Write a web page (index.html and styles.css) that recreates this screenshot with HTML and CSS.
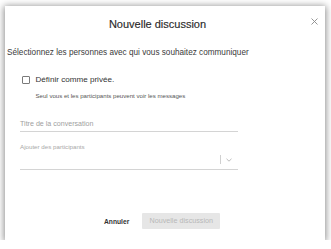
FILE: index.html
```html
<!DOCTYPE html>
<html lang="fr">
<head>
<meta charset="utf-8">
<title>Nouvelle discussion</title>
<link rel="stylesheet" href="styles.css">
</head>
<body>
<div class="modal">
  <div class="header">
    <div class="title">Nouvelle discussion</div>
    <button class="close" aria-label="Fermer">
      <svg width="7" height="7" viewBox="0 0 7 7"><path d="M0.5 0.5L6.5 6.5M6.5 0.5L0.5 6.5" stroke="#8a8a8a" stroke-width="0.9" fill="none"/></svg>
    </button>
  </div>
  <div class="subtitle">Sélectionnez les personnes avec qui vous souhaitez communiquer</div>
  <label class="check-row">
    <span class="checkbox"></span>
    <span class="check-label">Définir comme privée.</span>
  </label>
  <div class="helper">Seul vous et les participants peuvent voir les messages</div>
  <div class="field">
    <span class="placeholder">Titre de la conversation</span>
  </div>
  <div class="field-label">Ajouter des participants</div>
  <div class="select">
    <span class="sep"></span>
    <svg class="chev" width="6" height="4" viewBox="0 0 6 4"><path d="M0.5 0.8L3 3.2L5.5 0.8" stroke="#aaa" stroke-width="0.8" fill="none"/></svg>
  </div>
  <div class="actions">
    <span class="cancel">Annuler</span>
    <span class="primary">Nouvelle discussion</span>
  </div>
</div>
</body>
</html>
```
FILE: styles.css
```css
html, body {
  margin: 0;
  padding: 0;
  background: #ffffff;
}
body {
  padding: 6px 0 0 5px;
  font-family: "Liberation Sans", Arial, sans-serif;
}
.modal {
  width: 320px;
  height: 234px;
  background: #ffffff;
  box-shadow: 0 1px 7px 1px rgba(0, 0, 0, 0.45);
  display: flex;
  flex-direction: column;
  box-sizing: border-box;
  padding-bottom: 11px;
}
.header {
  display: flex;
  align-items: flex-start;
  padding-top: 9px;
}
.title {
  flex: 1;
  text-align: center;
  font-size: 11px;
  line-height: 13px;
  margin-top: 3px;
  color: #2a2a2a;
  padding-left: 2px;
  -webkit-text-stroke: 0.15px #2a2a2a;
}
.close {
  width: 12px;
  height: 12px;
  margin-right: 5px;
  padding: 0;
  border: 0;
  background: none;
  display: flex;
  align-items: center;
  justify-content: center;
}
.subtitle {
  margin-top: 17px;
  padding-left: 2px;
  font-size: 8.2px;
  line-height: 10px;
  color: #3a3a3a;
}
.check-row {
  margin-top: 17px;
  display: flex;
  align-items: center;
  height: 10px;
  padding-left: 17px;
}
.checkbox {
  flex: 0 0 7.5px;
  width: 7.5px;
  height: 7.5px;
  border: 1px solid #7a7a7a;
  border-radius: 1px;
  box-sizing: border-box;
  margin-right: 6px;
}
.check-label {
  font-size: 8.1px;
  line-height: 10px;
  color: #333;
}
.helper {
  margin-top: 7px;
  padding-left: 30.5px;
  font-size: 6.1px;
  line-height: 8px;
  color: #555;
}
.field {
  margin: 20px 0 0 15px;
  width: 218px;
  padding-bottom: 1.5px;
  border-bottom: 1px solid #d4d4d4;
  font-size: 7.1px;
  line-height: 9px;
}
.placeholder {
  color: #a0a0a0;
}
.field-label {
  margin: 11px 0 0 15px;
  font-size: 6.2px;
  line-height: 8px;
  color: #a8a8a8;
}
.select {
  margin-left: 15px;
  width: 218px;
  height: 19px;
  border-bottom: 1px solid #d4d4d4;
  display: flex;
  justify-content: flex-end;
  align-items: center;
  padding-right: 6px;
  box-sizing: border-box;
}
.sep {
  width: 1px;
  height: 9px;
  background: #d0d0d0;
  margin-right: 5px;
}
.actions {
  margin-top: auto;
  display: flex;
  align-items: center;
  padding-left: 99px;
}
.cancel {
  font-size: 6.7px;
  font-weight: bold;
  color: #333;
  margin-right: 13px;
}
.primary {
  width: 78px;
  height: 16px;
  background: #e6e6e6;
  border-radius: 1px;
  color: #b8b8b8;
  font-size: 7.2px;
  line-height: 16px;
  text-align: center;
}
```
